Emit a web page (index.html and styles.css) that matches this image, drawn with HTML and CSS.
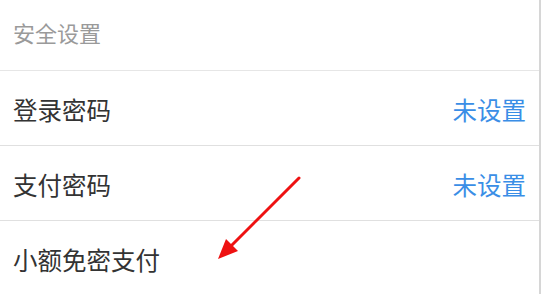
FILE: index.html
```html
<!DOCTYPE html>
<html lang="zh-CN">
<head>
  <meta charset="UTF-8">
  <meta name="viewport" content="width=device-width, initial-scale=1.0">
  <title>安全设置</title>
  <link rel="stylesheet" href="styles.css">
</head>
<body>

  <div class="page">
    <div class="section-title">安全设置</div>

    <div class="row">
      <span class="label">登录密码</span>
      <span class="value">未设置</span>
    </div>

    <div class="row">
      <span class="label">支付密码</span>
      <span class="value">未设置</span>
    </div>

    <div class="row last">
      <span class="label">小额免密支付</span>
    </div>

    <svg class="arrow" width="541" height="294" viewBox="0 0 541 294">
      <line x1="299" y1="178" x2="229" y2="248" stroke="#ee1111" stroke-width="3" stroke-linecap="round"/>
      <polygon points="218,259 226,239 238,251" fill="#ee1111"/>
    </svg>
  </div>

</body>
</html>
```

FILE: styles.css
```css
html, body {
  margin: 0;
  padding: 0;
  background: #fff;
}
body {
  font-family: "Noto Sans CJK SC", "Noto Sans", sans-serif;
  color: #333;
}
.page {
  position: relative;
  width: 539px;
  height: 294px;
  border-right: 2px solid #d6d6d6;
  overflow: hidden;
}
.section-title {
  height: 71px;
  display: flex;
  align-items: center;
  padding: 0 0 6px 13px;
  box-sizing: border-box;
  font-size: 22px;
  color: #9a9a9a;
  border-bottom: 1px solid #e6e6e6;
}
.row {
  height: 75px;
  display: flex;
  align-items: center;
  justify-content: space-between;
  padding: 2px 13px 0 13px;
  box-sizing: border-box;
  border-bottom: 1px solid #e0e0e0;
  font-size: 24.5px;
}
.row.last {
  border-bottom: none;
}
.label {
  color: #333;
}
.value {
  color: #3a8ee6;
}
.arrow {
  position: absolute;
  left: 0;
  top: 0;
  pointer-events: none;
}
```
